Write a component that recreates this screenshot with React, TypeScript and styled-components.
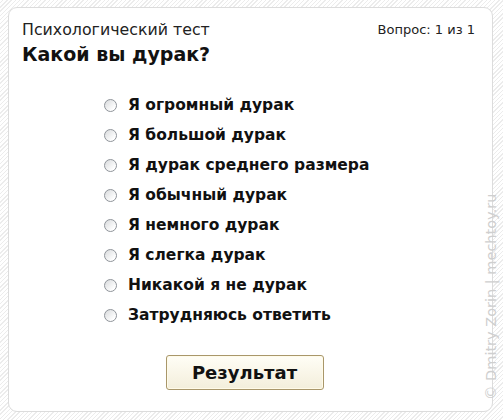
import React, { useState } from "react";
import styled, { createGlobalStyle } from "styled-components";

const answers: string[] = [
  "Я огромный дурак",
  "Я большой дурак",
  "Я дурак среднего размера",
  "Я обычный дурак",
  "Я немного дурак",
  "Я слегка дурак",
  "Никакой я не дурак",
  "Затрудняюсь ответить",
];

const GlobalStyle = createGlobalStyle`
  html, body {
    margin: 0;
    padding: 0;
    background-color: #fbfbfb;
    background-image: repeating-linear-gradient(
      -45deg,
      #ffffff 0px,
      #ffffff 2px,
      #ececec 2px,
      #ececec 3px
    );
    font-family: "DejaVu Sans", Verdana, sans-serif;
  }
`;

const Page = styled.div`
  width: 503px;
  height: 420px;
  padding: 7px 10px 8px 8px;
  box-sizing: border-box;
  position: relative;
  overflow: hidden;
`;

const Card = styled.div`
  height: 100%;
  box-sizing: border-box;
  background: #ffffff;
  border: 1px solid #dcdcdc;
  border-radius: 9px;
  padding: 13px 17px 0 13px;
  display: flex;
  flex-direction: column;
`;

const Header = styled.div`
  display: flex;
  justify-content: space-between;
  align-items: flex-start;
`;

const Subtitle = styled.div`
  font-size: 15.8px;
  color: #222;
  line-height: 18px;
`;

const Title = styled.h1`
  margin: 3px 0 0;
  font-size: 19px;
  font-weight: bold;
  color: #111;
  line-height: 24px;
`;

const Counter = styled.div`
  font-size: 13px;
  color: #222;
  line-height: 18px;
`;

const List = styled.div`
  margin-top: 24px;
  padding-left: 82px;
  display: flex;
  flex-direction: column;
`;

const Option = styled.label`
  display: flex;
  align-items: center;
  gap: 11px;
  height: 30px;
  font-size: 15.5px;
  font-weight: bold;
  color: #111;
  cursor: pointer;
`;

const Radio = styled.input`
  appearance: none;
  margin: 0;
  width: 13px;
  height: 13px;
  border-radius: 50%;
  border: 1px solid #8f949a;
  background: linear-gradient(135deg, #d8dadc 0%, #ffffff 80%);
  box-sizing: border-box;
  &:checked {
    background: radial-gradient(circle, #2a6e2a 0 3px, #f4f4f4 3.5px);
  }
`;

const Footer = styled.div`
  display: flex;
  justify-content: center;
  padding-right: 8px;
  margin-top: 25px;
`;

const Button = styled.button`
  width: 158px;
  height: 35px;
  font-family: "DejaVu Sans", Verdana, sans-serif;
  font-size: 18px;
  font-weight: bold;
  color: #111;
  background: linear-gradient(#fffef6, #f3eedb);
  border: 1px solid #a9976a;
  border-radius: 3px;
  box-shadow: inset 0 0 0 1px #fffbe9;
  cursor: pointer;
`;

const Watermark = styled.div`
  position: absolute;
  right: 4px;
  bottom: 20px;
  transform-origin: right bottom;
  transform: rotate(-90deg) translate(100%, 0);
  font-family: "DejaVu Sans", sans-serif;
  font-size: 14.5px;
  color: #cfcfcf;
  white-space: nowrap;
  pointer-events: none;
`;

const App: React.FC = () => {
  const [choice, setChoice] = useState<number | null>(null);

  return (
    <>
      <GlobalStyle />
      <Page>
        <Card>
          <Header>
            <div>
              <Subtitle>Психологический тест</Subtitle>
              <Title>Какой вы дурак?</Title>
            </div>
            <Counter>Вопрос: 1 из 1</Counter>
          </Header>
          <List>
            {answers.map((text, i) => (
              <Option key={i}>
                <Radio
                  type="radio"
                  name="answer"
                  checked={choice === i}
                  onChange={() => setChoice(i)}
                />
                {text}
              </Option>
            ))}
          </List>
          <Footer>
            <Button type="button">Результат</Button>
          </Footer>
        </Card>
        <Watermark>© Dmitry Zorin | mechtoy.ru</Watermark>
      </Page>
    </>
  );
};

export default App;
